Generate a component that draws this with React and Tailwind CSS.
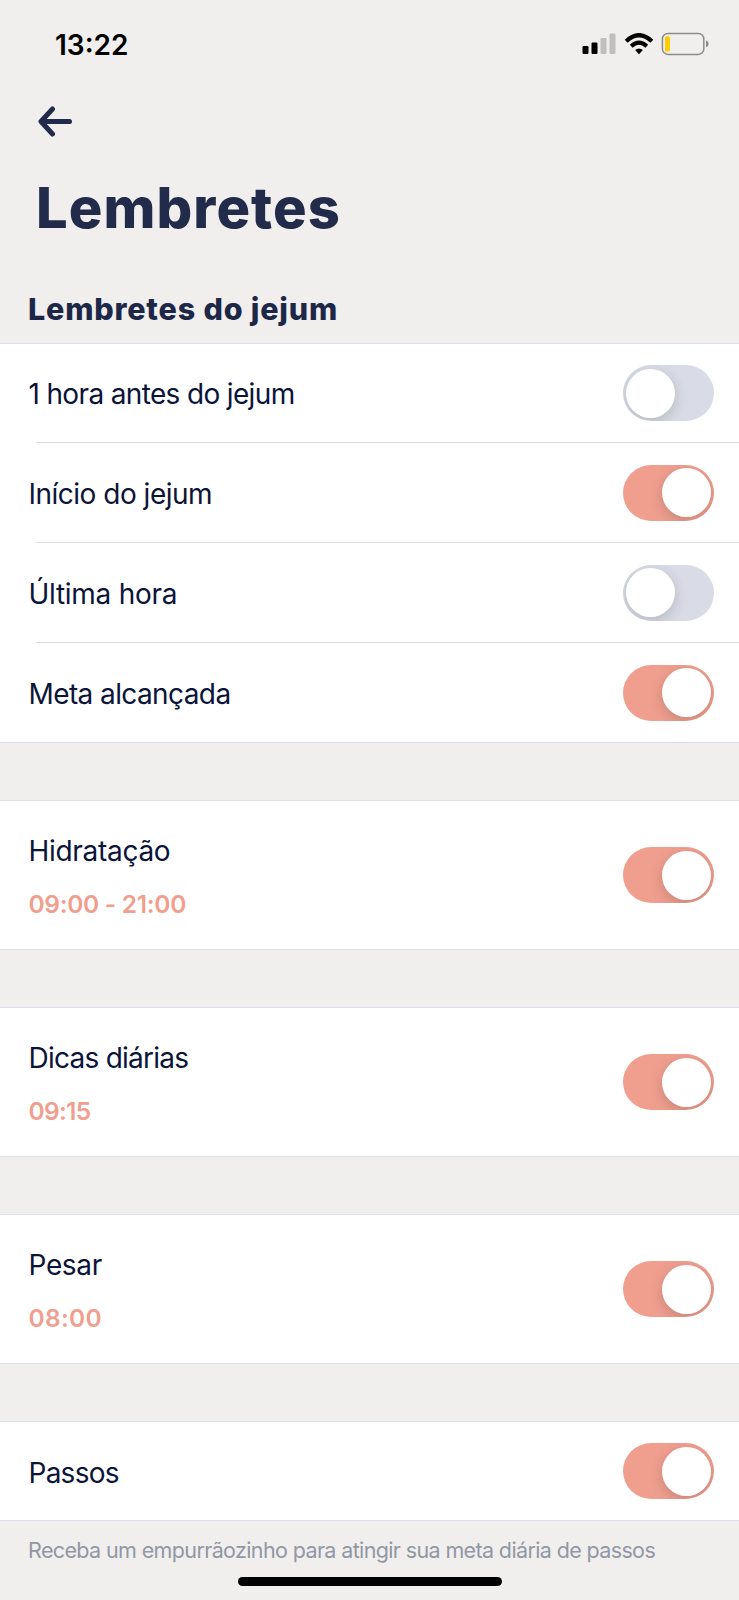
import { useState } from "react";

const fastingReminders = [
  { id: "before", label: "1 hora antes do jejum", tracking: "tracking-[-0.65px]" },
  { id: "start", label: "Início do jejum", tracking: "tracking-[-0.5px]" },
  { id: "last", label: "Última hora", tracking: "tracking-[-0.28px]" },
  { id: "goal", label: "Meta alcançada", tracking: "tracking-[-0.6px]" },
];

const dailyReminders = [
  { id: "water", label: "Hidratação", time: "09:00 - 21:00", tracking: "tracking-[-0.3px]", timeTracking: "tracking-[-0.3px]" },
  { id: "tips", label: "Dicas diárias", time: "09:15", tracking: "tracking-[-0.75px]", timeTracking: "tracking-[-0.7px]" },
  { id: "weight", label: "Pesar", time: "08:00", tracking: "tracking-[-0.35px]", timeTracking: "tracking-[0.3px]" },
];

function StatusBar() {
  return (
    <div className="flex h-[88px] items-center justify-between pl-[55px] pr-[30px]">
      <span className="pt-px text-[28px] font-semibold leading-none text-black">13:22</span>
      <div className="flex items-center">
        {/* Signal */}
        <svg width="34" height="22" viewBox="0 0 34 22" className="mr-[8px]">
          <rect x="0.5" y="13" width="6" height="8" rx="1.2" fill="#000" />
          <rect x="9.5" y="9.5" width="6" height="11.5" rx="1.2" fill="#000" />
          <rect x="18.5" y="5" width="6" height="16" rx="1.2" fill="#c0bfbd" />
          <rect x="27.5" y="0.5" width="6" height="20.5" rx="1.2" fill="#c0bfbd" />
        </svg>
        {/* Wi-Fi */}
        <svg width="30" height="22" viewBox="0 0 30 22" className="mr-[7px]">
          <path d="M2.2 8.2 Q15 -3.8 27.8 8.2" fill="none" stroke="#000" strokeWidth="4.3" />
          <path d="M7.2 13.2 Q15 6.2 22.8 13.2" fill="none" stroke="#000" strokeWidth="4.1" />
          <path d="M11.1 17.1 Q15 13.9 18.9 17.1 L15 21.2 Z" fill="#000" />
        </svg>
        {/* Battery */}
        <svg width="48" height="24" viewBox="0 0 48 24">
          <rect x="1.4" y="1.4" width="41.4" height="21" rx="5.5" fill="none" stroke="#8c8b8a" strokeWidth="1.5" />
          <rect x="4" y="4.2" width="5" height="15.4" rx="1.6" fill="#ffcc00" />
          <path d="M45 8.6 C48.4 9.6 48.4 14.2 45 15.2 Z" fill="#8c8b8a" />
        </svg>
      </div>
    </div>
  );
}

function Toggle({ on, onClick }) {
  return (
    <button
      role="switch"
      aria-checked={on}
      onClick={onClick}
      className={`flex h-[56px] w-[91px] shrink-0 items-center overflow-hidden rounded-full px-[3px] ${
        on ? "justify-end bg-[#f09f8f]" : "justify-start bg-[#d9dce6]"
      }`}
    >
      <span className="size-[49px] rounded-full bg-white shadow-[0_4px_14px_rgba(0,0,0,0.17)]" />
    </button>
  );
}

function App() {
  const [enabled, setEnabled] = useState({
    before: false,
    start: true,
    last: false,
    goal: true,
    water: true,
    tips: true,
    weight: true,
    steps: true,
  });

  const toggle = (id) => setEnabled((prev) => ({ ...prev, [id]: !prev[id] }));

  return (
    <div className="flex h-[1600px] w-[739px] flex-col overflow-hidden bg-[#f0efed] font-['Inter',sans-serif] text-[#0b1439]">
      <StatusBar />

      {/* Header */}
      <header className="flex h-[255px] shrink-0 flex-col">
        <button className="ml-[38px] mt-[17px] h-[33px] w-[36px]" aria-label="Voltar">
          <svg width="36" height="33" viewBox="0 0 36 33" fill="none" stroke="#222b4b" strokeWidth="5" strokeLinecap="round" strokeLinejoin="round">
            <path d="M14.5 4 L3 16.5 L14.5 29 M4 16.5 H31.5" />
          </svg>
        </button>
        <h1 className="ml-[36px] mt-[40px] text-[56px] font-extrabold leading-[60px] tracking-[1.1px] text-[#232b4a]">Lembretes</h1>
        <h2 className="ml-[28px] mt-[53px] text-[30.5px] font-extrabold leading-[36px] tracking-[0.8px] text-[#1d2748]">Lembretes do jejum</h2>
      </header>

      {/* Fasting reminders */}
      <section className="flex h-[400px] shrink-0 flex-col border-y border-[#dcdff0] bg-white">
        {fastingReminders.map((item, index) => (
          <div key={item.id} className="flex flex-col">
            {index > 0 && <div className="ml-[36px] h-px bg-[#d8ddf0]" />}
            <div className={`flex items-center justify-between pl-[28.5px] pr-[25px] ${index > 0 ? "h-[99px]" : "h-[98px]"}`}>
              <span className={`pt-[2px] text-[28px] leading-[34px] ${item.tracking}`}>{item.label}</span>
              <Toggle on={enabled[item.id]} onClick={() => toggle(item.id)} />
            </div>
          </div>
        ))}
      </section>

      {/* Reminders with a time */}
      {dailyReminders.map((item) => (
        <section key={item.id} className="mt-[57px] flex h-[150px] shrink-0 items-center justify-between border-y border-[#dcdff0] bg-white pl-[28.5px] pr-[25px]">
          <div className="flex flex-col gap-[21px] pt-[2px]">
            <span className={`text-[28px] leading-[34px] ${item.tracking}`}>{item.label}</span>
            <span className={`text-[24.5px] font-semibold leading-[30px] text-[#f09f8f] ${item.timeTracking}`}>{item.time}</span>
          </div>
          <Toggle on={enabled[item.id]} onClick={() => toggle(item.id)} />
        </section>
      ))}

      <section className="mt-[57px] flex h-[100px] shrink-0 items-center justify-between border-y border-[#dcdff0] bg-white pl-[28.5px] pr-[25px]">
        <span className="pt-[3px] text-[28px] leading-[34px] tracking-[-0.75px]">Passos</span>
        <Toggle on={enabled.steps} onClick={() => toggle("steps")} />
      </section>

      <p className="ml-[28px] mt-[15px] whitespace-nowrap text-[21.5px] leading-[28px] tracking-[-0.63px] text-[#9297a5]">
        Receba um empurrãozinho para atingir sua meta diária de passos
      </p>

      {/* Home indicator */}
      <div className="mx-auto mt-auto mb-[14px] h-[9px] w-[264px] rounded-full bg-black" />
    </div>
  );
}

export default App;
